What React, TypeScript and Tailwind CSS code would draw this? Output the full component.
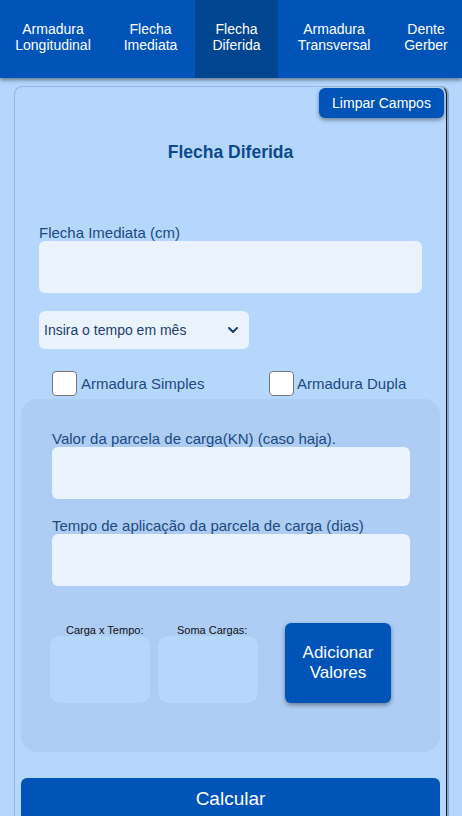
import { ChevronDown } from "lucide-react";

const tabs = [
  { label: ["Armadura", "Longitudinal"], w: "w-[106px]", active: false },
  { label: ["Flecha", "Imediata"], w: "w-[89px]", active: false },
  { label: ["Flecha", "Diferida"], w: "w-[83px]", active: true },
  { label: ["Armadura", "Transversal"], w: "w-[112px]", active: false },
  { label: ["Dente", "Gerber"], w: "w-[72px]", active: false },
];

const Field = ({ label, width }: { label: string; width: string }) => (
  <div className="flex flex-col">
    <label className="text-[15px] leading-[17px] text-[#1d4a80]">{label}</label>
    <input
      className={`${width} h-[52px] rounded-md bg-[#ebf3ff] outline-none`}
      type="text"
    />
  </div>
);

const App = () => {
  return (
    <div className="w-[462px] h-[816px] overflow-hidden bg-[#b5d7fd] font-['Liberation_Sans',Arial,sans-serif]">
      <nav className="relative z-10 flex h-[78px] bg-[#0054b8] shadow-[0_2px_4px_rgba(0,0,0,0.45)]">
        {tabs.map((t) => (
          <div
            key={t.label.join(" ")}
            className={`${t.w} flex flex-col items-center justify-center pb-[4px] text-[14px] leading-[16px] text-white ${
              t.active ? "bg-[#00458f]" : ""
            }`}
          >
            <span>{t.label[0]}</span>
            <span>{t.label[1]}</span>
          </div>
        ))}
      </nav>

      <div className="pl-[14px] pt-[8px]">
        <div className="w-[433px] rounded-t-[8px] border border-[#9ab6da] border-r-[#1a1a1a] bg-[#b5d7fd] shadow-[2px_0_0_#8fa6c4]">
          <div className="flex justify-end pr-[2px] pt-[1px]">
            <button className="h-[30px] w-[125px] rounded-md bg-[#0054b8] text-[14px] text-white shadow-[0_2px_4px_rgba(0,0,0,0.4)]">
              Limpar Campos
            </button>
          </div>

          <h2 className="mt-[24px] text-center text-[17.5px] font-bold leading-[20px] text-[#0d4a8c]">
            Flecha Diferida
          </h2>

          <div className="mt-[62px] px-6">
            <Field label="Flecha Imediata (cm)" width="w-[383px]" />

            <div className="mt-[18px] flex h-[38px] w-[210px] items-center justify-between rounded-md bg-[#ebf3ff] pl-[5px] pr-[8px]">
              <span className="text-[14px] text-[#1b3f6e]">Insira o tempo em mês</span>
              <ChevronDown className="h-4 w-4 text-[#1b3f6e]" strokeWidth={3} />
            </div>
          </div>

          <div className="mt-[22px] flex h-[25px] pl-[37px]">
            <div className="flex w-[217px] items-center gap-[4px]">
              <span className="h-[25px] w-[25px] rounded-[4px] border border-[#777] bg-white" />
              <span className="text-[15px] leading-[18px] text-[#1d4a80]">Armadura Simples</span>
            </div>
            <div className="flex items-center gap-[3px]">
              <span className="h-[25px] w-[25px] rounded-[4px] border border-[#777] bg-white" />
              <span className="text-[15px] leading-[18px] text-[#1d4a80]">Armadura Dupla</span>
            </div>
          </div>

          <div className="mx-[6px] mt-[3px] rounded-[16px] bg-[#adcdf4] pb-[49px] pl-[31px] pt-[31px]">
            <Field label="Valor da parcela de carga(KN) (caso haja)." width="w-[358px]" />
            <div className="mt-[18px]">
              <Field
                label="Tempo de aplicação da parcela de carga (dias)"
                width="w-[358px]"
              />
            </div>

            <div className="mt-[38px] -ml-[2px] flex items-start">
              <div className="flex flex-col">
                <span className="ml-[16px] text-[11px] leading-[12px] text-[#111]">Carga x Tempo:</span>
                <div className="h-[67px] w-[100px] rounded-[10px] bg-[#b5d7fd]" />
              </div>
              <div className="ml-[8px] flex flex-col">
                <span className="ml-[19px] text-[11px] leading-[12px] text-[#111]">Soma Cargas:</span>
                <div className="h-[67px] w-[100px] rounded-[10px] bg-[#b5d7fd]" />
              </div>
              <button className="-mt-[1px] ml-[27px] h-[80px] w-[106px] rounded-md bg-[#0054b8] text-[17px] leading-[20px] text-white shadow-[0_2px_4px_rgba(0,0,0,0.4)]">
                Adicionar
                <br />
                Valores
              </button>
            </div>
          </div>

          <div className="mx-[6px] mt-[26px]">
            <button className="h-[44px] w-full rounded-md bg-[#0054b8] pb-[2px] text-[19px] text-white">
              Calcular
            </button>
          </div>
        </div>
      </div>
    </div>
  );
};

export default App;
